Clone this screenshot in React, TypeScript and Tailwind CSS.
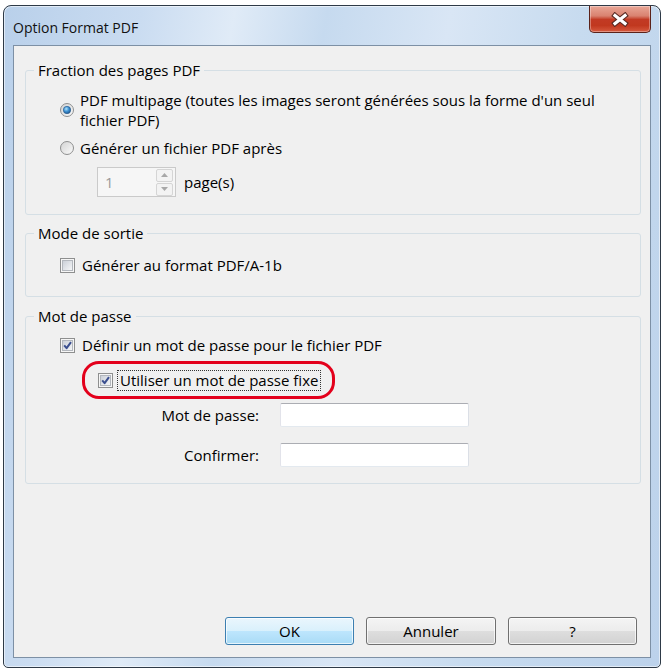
import React from 'react'

function CheckBox({ checked }: { checked: boolean }) {
  return (
    <svg width="15" height="15" viewBox="0 0 15 15" className="shrink-0">
      <defs>
        <linearGradient id="cbIn" x1="0" y1="0" x2="1" y2="1">
          <stop offset="0" stopColor="#c9ced6" />
          <stop offset="1" stopColor="#f7f8f9" />
        </linearGradient>
      </defs>
      <rect x="0.5" y="0.5" width="14" height="14" fill="#f6f6f6" stroke="#8e8f8f" />
      <rect x="2.5" y="2.5" width="10" height="10" fill="url(#cbIn)" stroke="#b3b7bd" />
      {checked && <path d="M4.2 7.4 L6.6 10.2 L11 4.2" fill="none" stroke="#3b4f8f" strokeWidth="2" strokeLinejoin="round" />}
    </svg>
  )
}

function Radio({ checked }: { checked: boolean }) {
  return (
    <svg width="14" height="14" viewBox="0 0 14 14" className="shrink-0">
      <defs>
        <linearGradient id="rdOut" x1="0" y1="0" x2="1" y2="1">
          <stop offset="0" stopColor="#d2d2d2" />
          <stop offset="1" stopColor="#fbfbfb" />
        </linearGradient>
        <radialGradient id="rdDot" cx="0.4" cy="0.35" r="0.75">
          <stop offset="0" stopColor="#b4e4fb" />
          <stop offset="0.45" stopColor="#3f93d4" />
          <stop offset="1" stopColor="#174a80" />
        </radialGradient>
      </defs>
      <circle cx="7" cy="7" r="6.5" fill="url(#rdOut)" stroke="#8e8f8f" />
      {checked && <circle cx="7" cy="7" r="3.7" fill="url(#rdDot)" stroke="#25578a" strokeWidth="0.6" />}
    </svg>
  )
}

function CloseButton() {
  return (
    <div className="w-[62px] h-[27px] rounded-b-[5px] border border-t-0 border-[#5b2219] bg-[linear-gradient(#e9a797_0%,#d98270_38%,#c23a24_52%,#c1381f_75%,#d65a3f_100%)] shadow-[inset_0_0_0_1px_rgba(255,255,255,0.35)] flex items-center justify-center">
      <svg width="20" height="15" viewBox="0 0 20 15">
        <path d="M5 3.5 L15 11.5 M15 3.5 L5 11.5" stroke="#5a2a22" strokeWidth="5.4" strokeLinecap="square" />
        <path d="M5 3.5 L15 11.5 M15 3.5 L5 11.5" stroke="#ffffff" strokeWidth="3.2" strokeLinecap="square" />
      </svg>
    </div>
  )
}

function TextBox() {
  return (
    <div className="w-[189px] h-[24px] bg-white border border-[#e3e9ef] border-t-[#abadb3] border-l-[#e2e3ea] border-r-[#dbdfe6] rounded-[2px]" />
  )
}

function SpinArrow({ up }: { up: boolean }) {
  return (
    <div className="w-[17px] h-[13px] border border-[#d5d5d5] rounded-[2px] bg-[#f3f3f3] flex items-center justify-center">
      <svg width="7" height="4" viewBox="0 0 7 4">
        <path d={up ? 'M0 4 L3.5 0 L7 4 Z' : 'M0 0 L3.5 4 L7 0 Z'} fill="#a8a8a8" />
      </svg>
    </div>
  )
}

export default function App() {
  return (
    <div className="w-[665px] h-[671px] bg-white pt-[5px] pl-[3px] font-['Open_Sans','Noto_Sans',sans-serif] text-[15px] leading-[20px] text-black">
      <div className="w-[658px] h-[663px] flex flex-col rounded-t-[8px] rounded-b-[5px] border border-[#2e3a47] bg-[linear-gradient(100deg,#b9d0ea_0%,#cadcf1_18%,#e0ebf7_30%,#c6daef_42%,#d9e6f5_58%,#c7dbef_75%,#bcd2eb_100%)] shadow-[inset_0_0_0_1px_rgba(255,255,255,0.55)] px-[9px] pb-[9px]">
        {/* title bar */}
        <div className="h-[39px] flex justify-between items-start">
          <div className="pt-[12px] text-[14px] text-[#111]">Option Format PDF</div>
          <CloseButton />
        </div>

        {/* client area */}
        <div className="flex-1 flex flex-col bg-[#f0f0f0] border border-[#7d90a5] pt-[14px] pl-[11px] pr-[9px] pb-[12px]">
          <fieldset className="border border-[#d5dfe5] rounded-[3px] pt-[10px] pb-[17px]">
            <legend className="ml-[8px] px-[4px] leading-[20px]">Fraction des pages PDF</legend>
            <div className="pl-[34px]">
              <div className="flex items-center gap-[6px]">
                <Radio checked={true} />
                <div>
                  PDF multipage (toutes les images seront générées sous la forme d'un seul
                  <br />
                  fichier PDF)
                </div>
              </div>
              <div className="mt-[8px] flex items-center gap-[6px]">
                <Radio checked={false} />
                <span>Générer un fichier PDF après</span>
              </div>
              <div className="mt-[9px] flex items-center">
                <div className="ml-[37px] w-[79px] h-[30px] border border-[#cacaca] bg-[#f6f6f6] flex items-center justify-between pl-[7px] pr-[2px] text-[#9a9a9a]">
                  <span>1</span>
                  <div className="flex flex-col gap-[1px]">
                    <SpinArrow up={true} />
                    <SpinArrow up={false} />
                  </div>
                </div>
                <span className="ml-[8px]">page(s)</span>
              </div>
            </div>
          </fieldset>

          <fieldset className="mt-[8px] border border-[#d5dfe5] rounded-[3px] pt-[12px] pb-[21px]">
            <legend className="ml-[8px] px-[4px] leading-[20px]">Mode de sortie</legend>
            <div className="pl-[34px] flex items-center gap-[7px]">
              <CheckBox checked={false} />
              <span>Générer au format PDF/A-1b</span>
            </div>
          </fieldset>

          <fieldset className="mt-[9px] border border-[#d5dfe5] rounded-[3px] pt-[9px] pb-[16px]">
            <legend className="ml-[8px] px-[4px] leading-[20px]">Mot de passe</legend>
            <div className="pl-[34px]">
              <div className="flex items-center gap-[7px]">
                <CheckBox checked={true} />
                <span>Définir un mot de passe pour le fichier PDF</span>
              </div>
              <div className="relative mt-[15px] flex items-center">
                <div className="ml-[38px]">
                  <CheckBox checked={true} />
                </div>
                <span className="ml-[4px] px-[2px] leading-[19px] border border-dotted border-[#333]">Utiliser un mot de passe fixe</span>
                <div className="absolute left-[22px] top-[-9px] w-[253px] h-[38px] rounded-[17px] border-[3.5px] border-[#e3001b]" />
              </div>
              <div className="mt-[12px] flex items-center">
                <div className="w-[199px] text-right">Mot de passe:</div>
                <div className="ml-[21px]">
                  <TextBox />
                </div>
              </div>
              <div className="mt-[16px] flex items-center">
                <div className="w-[199px] text-right">Confirmer:</div>
                <div className="ml-[21px]">
                  <TextBox />
                </div>
              </div>
            </div>
          </fieldset>

          <div className="mt-auto flex justify-end gap-[12px] pr-[4px]">
            <div className="w-[129px] h-[28px] rounded-[3px] border border-[#3c7fb1] bg-[linear-gradient(#eaf6fd_0%,#d9f0fc_50%,#bee6fd_50%,#a9dbf6_100%)] shadow-[inset_0_0_0_1px_rgba(255,255,255,0.7)] flex items-center justify-center">OK</div>
            <div className="w-[130px] h-[28px] rounded-[3px] border border-[#707070] bg-[linear-gradient(#f4f4f4_0%,#ececec_50%,#dedede_50%,#d2d2d2_100%)] shadow-[inset_0_0_0_1px_rgba(255,255,255,0.7)] flex items-center justify-center">Annuler</div>
            <div className="w-[129px] h-[28px] rounded-[3px] border border-[#707070] bg-[linear-gradient(#f4f4f4_0%,#ececec_50%,#dedede_50%,#d2d2d2_100%)] shadow-[inset_0_0_0_1px_rgba(255,255,255,0.7)] flex items-center justify-center">?</div>
          </div>
        </div>
      </div>
    </div>
  )
}
